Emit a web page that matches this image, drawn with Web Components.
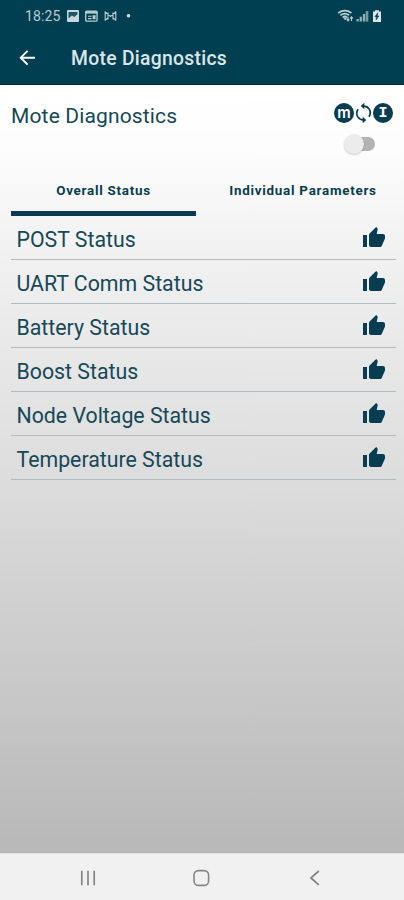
<!DOCTYPE html>
<html lang="en">
<head>
<meta charset="utf-8">
<meta name="viewport" content="width=device-width">
<title>Mote Diagnostics</title>
<style>
html,body{margin:0;height:100%}
body{font-family:Roboto,"Liberation Sans",sans-serif;--ink:#063d50;--bar:#003f51;color:#164858}
</style>
</head>
<body>
<diag-screen></diag-screen>
<script>
const define = (name, html) => customElements.define(name, class extends HTMLElement {
  constructor() {
    super();
    this.attachShadow({mode: 'open'}).innerHTML = html;
  }
});

define('status-bar', `<style>
:host{display:flex;box-sizing:border-box;height:32px;padding:0 21px 0 25px;align-items:center;color:#b9cdd2;background:var(--bar)}
.time{font-size:14px;line-height:32px;width:41px;letter-spacing:.1px}
svg{display:block}
.end{margin-left:auto}
</style>
<span class="time">18:25</span>
<svg width="68" height="16" viewBox="0 0 68 16" fill="none" stroke="currentColor">
 <rect x="1" y="2" width="12" height="12" rx="1" fill="#c9d8dc" stroke="none"/>
 <path d="M2.5 10.4V4h9v2.2L8.3 9.1 5.8 7.5z" fill="#003f51" stroke="none" opacity=".85"/>
 <rect x="19.7" y="3.2" width="11.4" height="10" rx="1" stroke-width="1.3"/>
 <path d="M19.4 4.4h12" stroke-width="2.4"/><path d="M22 8.2h3.6M22 10.6h3.6" stroke-width="1.1"/><path d="M26.6 7.2h3v4h-3z" fill="currentColor" stroke="none"/>
 <path d="M39.2 3.2v9.6M49.8 3.2v9.6M42 4.6v7M47 4.6v7M39.2 3.8l5.3 4.7 5.3-4.7M39.2 12l2.8-2M49.8 12 47 10" stroke-width="1.1"/>
 <circle cx="62.5" cy="7.8" r="1.8" fill="#d5e2e5" stroke="none"/>
</svg>
<svg class="end" width="47" height="16" viewBox="0 0 47 16" fill="none" stroke="currentColor">
 <path d="M2.2 5Q9 .4 15.4 5M4.4 7.2Q9 3.9 13 7.2M6.7 9.4Q9 7.6 11 9.4" stroke-width="1.8"/>
 <path d="M8 10.2h2.3l-1.1 1.5z" fill="currentColor"/>
 <path d="M12 8.7v4M10.7 11.3l1.3 1.5 1.3-1.5M15.5 13V9M14.2 10.3l1.3-1.4 1.3 1.4" stroke-width="1.2"/>
 <path d="M21.6 11v2.6M24.8 8.7v4.9M28 6v7.6" stroke-width="2.3" opacity=".8"/><path d="M31 3v10.6" stroke-width="2.6" opacity=".65"/>
 <path d="M37 3.6h2V2.2h4v1.4h2V14h-8z" fill="#dce7e9" stroke="none"/>
 <path d="M41.8 4.7 38.8 8.8h1.7l-.5 3.4 2.9-4.3h-1.6z" fill="#003f51" stroke="#003f51" stroke-width=".5"/>
</svg>`);

define('app-bar', `<style>
:host{display:flex;box-sizing:border-box;height:53px;padding:0 0 0 17px;align-items:center;color:#dce6e9;background:var(--bar);border-bottom:1px solid #012b3e}
svg{display:block;margin-right:32px}
h1{margin:0;padding-top:2px;font-size:19.3px;font-weight:500;line-height:50px;letter-spacing:.31px}
</style>
<svg width="22" height="22" viewBox="0 0 22 22" fill="none" stroke="#fff" stroke-width="1.9"><path d="M18 10.7H3.9M10.6 3.8 3.7 10.7l6.9 6.9"/></svg>
<h1><slot></slot></h1>`);

define('round-badge', `<style>
:host{display:flex;box-sizing:border-box;width:20px;height:20px;border-radius:50%;align-items:center;justify-content:center;background:var(--ink);color:#fff;font:bold 15px/20px "Liberation Mono",monospace;padding-top:2px}
:host([wide]){font:600 15px/18px Inter,sans-serif;padding:0 0 1px}
</style><slot></slot>`);

define('toggle-switch', `<style>
:host{display:block;width:31px;height:20px;position:relative}
i{position:absolute;left:8px;top:3px;width:23px;height:14px;border-radius:7px;background:#b3b3b3}
b{position:absolute;left:0;top:0;width:20px;height:20px;border-radius:50%;background:#ececec;box-shadow:0 1px 2px #0003}
</style><i></i><b></b>`);

define('link-mode', `<style>
:host{display:flex;flex-direction:column;align-items:flex-start;gap:10px;width:62px}
div{display:flex;align-items:center}
toggle-switch{margin-left:10px}
svg{display:block}
</style>
<div><round-badge wide>m</round-badge>
<svg width="19" height="22" viewBox="0 0 19 22" fill="none" stroke="#063d50" stroke-width="1.7"><path d="M8.3 4.2C14.5 3.3 18.3 9.3 15 14.8M10.7 17.8C4.5 18.7.7 12.7 4 7.2"/><path d="M10.3.8v6.4L6.7 4zM8.7 14.8v6.4l3.6-3.2z" fill="#063d50" stroke="none"/></svg>
<round-badge>I</round-badge></div>
<toggle-switch></toggle-switch>`);

define('tab-item', `<style>
:host{display:flex;box-sizing:border-box;height:50px;padding-top:4px;align-items:center;justify-content:center;color:#0a3c4e;font-size:13.4px;font-weight:700;line-height:20px;letter-spacing:.74px;white-space:nowrap;border-bottom:5px solid transparent}
:host([selected]){border-color:#0b3a52}
</style><slot></slot>`);

define('status-row', `<style>
:host{display:flex;box-sizing:border-box;height:44px;padding:3px 10px 0 5.5px;align-items:center;justify-content:space-between;font-size:21.3px;line-height:40px;border-bottom:1px solid #afbcc0}
span{white-space:nowrap;padding-top:1px}
svg{display:block;margin-top:-3px}
</style><span><slot></slot></span>
<svg width="24" height="24" viewBox="0 0 24 24" fill="#063d50"><path d="M1 21h4V9H1v12zm22-11c0-1.1-.9-2-2-2h-6.31l.95-4.57.03-.32c0-.41-.17-.79-.44-1.06L14.17 1 7.59 7.59C7.22 7.95 7 8.45 7 9v10c0 1.1.9 2 2 2h9c.83 0 1.54-.5 1.84-1.22l3.02-7.05c.09-.23.14-.47.14-.73v-2z"/></svg>`);

define('nav-bar', `<style>
:host{display:grid;grid-template-columns:repeat(3,113px);justify-content:center;place-items:center;height:47px;box-sizing:border-box;padding-top:2px;background:#f1f1f1;border-top:1px solid #e0e0e0}
svg{display:block}
</style>
<svg width="20" height="20" viewBox="0 0 20 20" fill="none" stroke="#858585" stroke-width="1.7"><path d="M2.8 2.7v14.6M9 2.7v14.6M15.2 2.7v14.6"/></svg>
<svg width="20" height="20" viewBox="0 0 20 20" fill="none" stroke="#868686" stroke-width="1.6"><rect x="2" y="2.6" width="14.6" height="14.8" rx="4.5"/></svg>
<svg width="20" height="20" viewBox="0 0 20 20" fill="none" stroke="#7f7f7f" stroke-width="1.7"><path d="M13.8 3 6 9.9l7.8 6.9"/></svg>`);

define('diag-screen', `<style>
:host{display:flex;flex-direction:column;width:404px;height:900px;overflow:hidden}
main{flex:1;display:flex;flex-direction:column;box-sizing:border-box;padding:17px 8px 0 11px;background:linear-gradient(#fff 0,#fdfdfd 8%,#f4f4f4 18%,#dcdcdc 52%,#b8b8b8 100%)}
header{display:flex;justify-content:space-between;align-items:flex-start;height:64px}
h2{margin:0;font-size:21px;font-weight:400;line-height:28px;letter-spacing:.15px}
nav{display:grid;grid-template-columns:185px 1fr}
tab-item:last-child{padding-left:14px}
</style>
<status-bar></status-bar>
<app-bar>Mote Diagnostics</app-bar>
<main>
<header><h2>Mote Diagnostics</h2><link-mode></link-mode></header>
<nav><tab-item selected>Overall Status</tab-item><tab-item>Individual Parameters</tab-item></nav>
<section>
<status-row>POST Status</status-row>
<status-row>UART Comm Status</status-row>
<status-row>Battery Status</status-row>
<status-row>Boost Status</status-row>
<status-row>Node Voltage Status</status-row>
<status-row>Temperature Status</status-row>
</section>
</main>
<nav-bar></nav-bar>`);
</script>
</body>
</html>
